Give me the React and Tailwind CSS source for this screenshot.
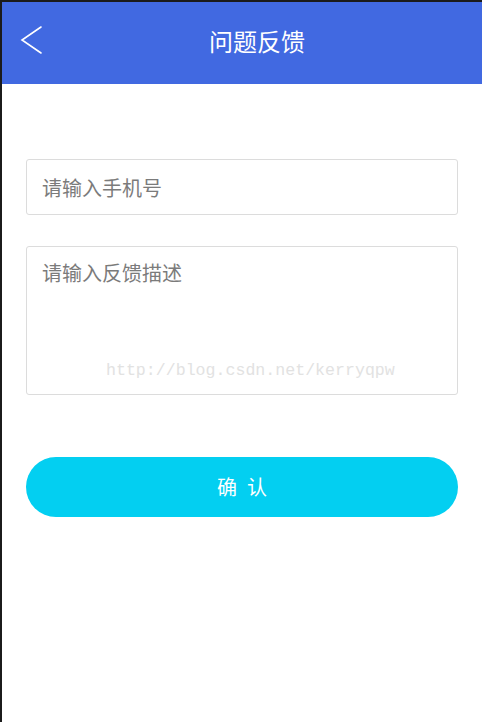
import React from "react";

export default function App() {
  return (
    <div
      className="w-[482px] h-[722px] bg-[#1b1b1b] pt-[2px] pl-[2px] overflow-hidden"
      style={{ fontFamily: '"Noto Sans CJK SC", "Noto Sans", sans-serif' }}
    >
      <div className="w-full h-full bg-white flex flex-col">
        <header className="h-[82px] bg-[#4169e1] flex shrink-0">
          <div className="w-[60px] pl-[18px] pt-[23px]">
            <svg width="24" height="30" viewBox="0 0 24 30" fill="none">
              <path d="M21 2 L2 15 L21 28" stroke="#ffffff" strokeWidth="1.6" strokeLinecap="round" strokeLinejoin="miter" />
            </svg>
          </div>
          <div className="flex-1 flex items-center justify-center pb-[4px]">
            <span className="text-white text-[24px] leading-[32px]">问题反馈</span>
          </div>
          <div className="w-[30px]" />
        </header>

        <div className="px-[24px] pt-[75px] flex flex-col">
          <input
            type="text"
            placeholder="请输入手机号"
            className="h-[56px] w-full border border-[#dcdcdc] rounded-[3px] pl-[15px] text-[20px] outline-none placeholder:text-[#7b7b7b] text-[#333]"
            style={{ fontFamily: '"Noto Sans CJK SC", sans-serif' }}
          />
          <div className="relative mt-[31px] h-[149px]">
            <textarea
              placeholder="请输入反馈描述"
              className="block h-full w-full resize-none border border-[#dcdcdc] rounded-[3px] pl-[15px] pt-[12px] text-[20px] leading-[28px] outline-none placeholder:text-[#7b7b7b] text-[#333]"
              style={{ fontFamily: '"Noto Sans CJK SC", sans-serif' }}
            />
            <span
              className="absolute left-[80px] top-[115px] text-[16.6px] leading-[20px] text-[#e2e2e2] pointer-events-none whitespace-nowrap"
              style={{ fontFamily: '"Liberation Mono", monospace' }}
            >
              http://blog.csdn.net/kerryqpw
            </span>
          </div>
          <button className="mt-[62px] h-[60px] w-full rounded-full bg-[#03cff1] text-white text-[20px] tracking-[0.5em] flex items-center justify-center pl-[0.5em]">
            确认
          </button>
        </div>
      </div>
    </div>
  );
}
